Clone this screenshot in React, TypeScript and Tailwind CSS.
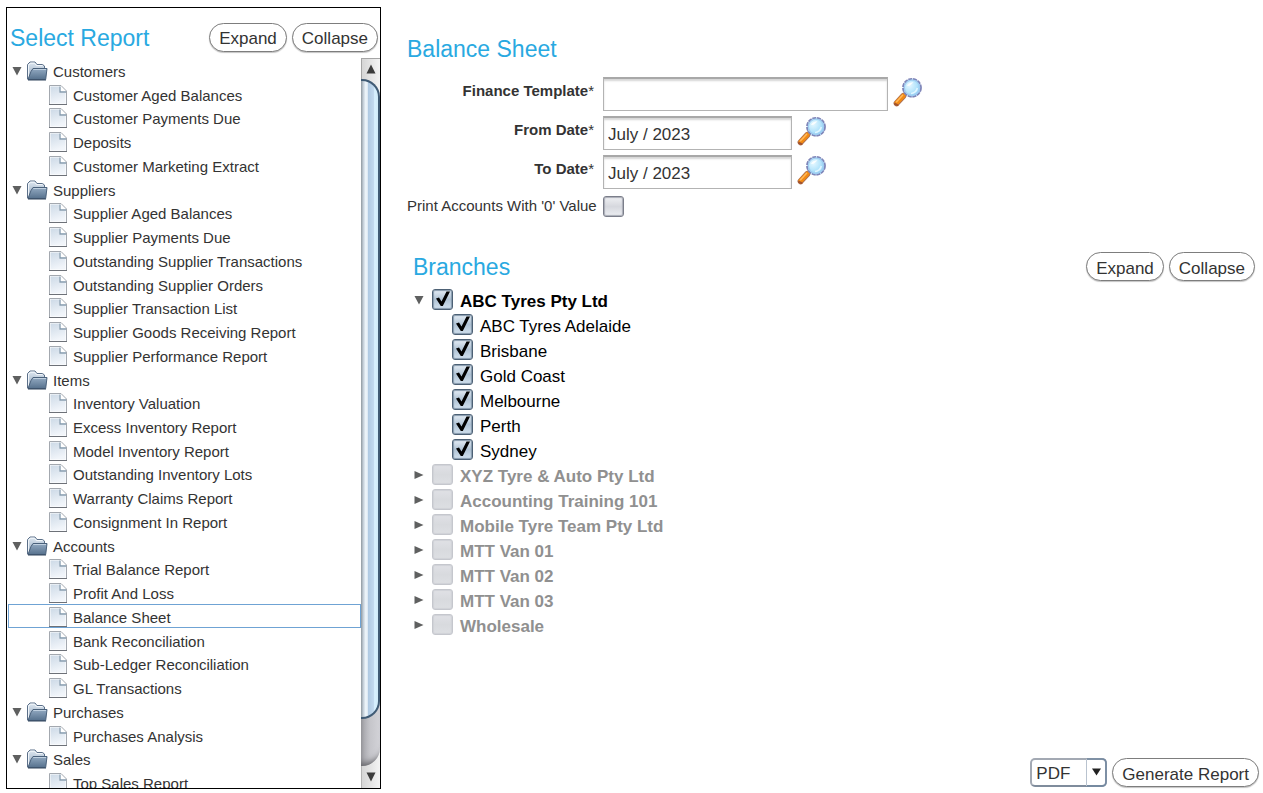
import { useState } from "react";
import type { ReactNode } from "react";

type Group = { name: string; reports: string[] };
type Branch = { name: string; disabled?: boolean; children?: string[] };

const GROUPS: Group[] = [
  {
    name: "Customers",
    reports: ["Customer Aged Balances", "Customer Payments Due", "Deposits", "Customer Marketing Extract"],
  },
  {
    name: "Suppliers",
    reports: [
      "Supplier Aged Balances",
      "Supplier Payments Due",
      "Outstanding Supplier Transactions",
      "Outstanding Supplier Orders",
      "Supplier Transaction List",
      "Supplier Goods Receiving Report",
      "Supplier Performance Report",
    ],
  },
  {
    name: "Items",
    reports: [
      "Inventory Valuation",
      "Excess Inventory Report",
      "Model Inventory Report",
      "Outstanding Inventory Lots",
      "Warranty Claims Report",
      "Consignment In Report",
    ],
  },
  {
    name: "Accounts",
    reports: [
      "Trial Balance Report",
      "Profit And Loss",
      "Balance Sheet",
      "Bank Reconciliation",
      "Sub-Ledger Reconciliation",
      "GL Transactions",
    ],
  },
  { name: "Purchases", reports: ["Purchases Analysis"] },
  { name: "Sales", reports: ["Top Sales Report"] },
];

const BRANCHES: Branch[] = [
  {
    name: "ABC Tyres Pty Ltd",
    children: ["ABC Tyres Adelaide", "Brisbane", "Gold Coast", "Melbourne", "Perth", "Sydney"],
  },
  { name: "XYZ Tyre & Auto Pty Ltd", disabled: true },
  { name: "Accounting Training 101", disabled: true },
  { name: "Mobile Tyre Team Pty Ltd", disabled: true },
  { name: "MTT Van 01", disabled: true },
  { name: "MTT Van 02", disabled: true },
  { name: "MTT Van 03", disabled: true },
  { name: "Wholesale", disabled: true },
];

function Triangle({ open }: { open: boolean }) {
  return (
    <svg width="10" height="10" viewBox="0 0 10 10" className="block" aria-hidden="true">
      <path d={open ? "M0.5 1H9.5L5 9.5Z" : "M0.5 1V9L9.5 5Z"} fill="#5f6060" />
    </svg>
  );
}

function FolderIcon() {
  return (
    <svg width="21" height="20" viewBox="0 0 21 20" className="block shrink-0" aria-hidden="true">
      <defs>
        <linearGradient id="folderBack" x1="0" y1="0" x2="0" y2="1">
          <stop offset="0" stopColor="#dfe8f1" />
          <stop offset="1" stopColor="#8ea4bc" />
        </linearGradient>
        <linearGradient id="folderFront" x1="0" y1="0" x2="0" y2="1">
          <stop offset="0" stopColor="#93aac2" />
          <stop offset="1" stopColor="#56718d" />
        </linearGradient>
      </defs>
      <path
        d="M0.5 18V3.5L3 1H8L10 3.5H15.5L17.5 5V10L15 18Z"
        fill="url(#folderBack)"
        stroke="#5b6f88"
        strokeLinejoin="round"
      />
      <path d="M1.6 17V4.2L3.5 2.2H7.5L9.5 4.6H15.4" fill="none" stroke="#f5f9fc" />
      <path d="M1 18.5L4 10.5L6 7.5H20L18.7 18.5Z" fill="url(#folderFront)" stroke="#4a617b" strokeLinejoin="round" />
      <path d="M6.3 8.5H19" stroke="#c0d0e0" />
      <path d="M1 19H19" stroke="#33475e" />
    </svg>
  );
}

function PageIcon() {
  return (
    <svg width="18" height="20" viewBox="0 0 18 20" className="block shrink-0" aria-hidden="true">
      <defs>
        <linearGradient id="page" x1="0" y1="0" x2="0.3" y2="1">
          <stop offset="0" stopColor="#cddae7" />
          <stop offset="1" stopColor="#f1f5fa" />
        </linearGradient>
      </defs>
      <path d="M0.5 0.5H12L17.5 6V19.5H0.5Z" fill="#fff" stroke="#a3a8af" />
      <path d="M1.5 1.5H10.5V8H16.5V18.5H1.5Z" fill="url(#page)" />
      <path d="M11 1L17 7H11Z" fill="#fff" />
      <path d="M11 1.5V7H17" fill="none" stroke="#8299ad" strokeWidth="1.3" />
      <path d="M0 19.5H18" stroke="#6d7178" />
    </svg>
  );
}

function MagnifierIcon() {
  return (
    <svg width="30" height="30" viewBox="0 0 30 30" className="block" aria-hidden="true">
      <defs>
        <radialGradient id="lens" cx="0.35" cy="0.35" r="0.75">
          <stop offset="0" stopColor="#e6f8ff" />
          <stop offset="0.55" stopColor="#b4e4fb" />
          <stop offset="1" stopColor="#86c6f2" />
        </radialGradient>
      </defs>
      <path d="M10 18L13 15.5" stroke="#8d8fa8" strokeWidth="3" />
      <path d="M3.6 26.2L10.4 18.9" stroke="#a87058" strokeWidth="6" strokeLinecap="round" />
      <path d="M3.6 26L10.4 18.7" stroke="#f28a14" strokeWidth="4.6" strokeLinecap="round" />
      <path d="M3.6 24.7L9.6 18.2" stroke="#ffb95c" strokeWidth="1.5" strokeLinecap="round" />
      <path d="M2 27L4.6 28.2" stroke="#a2532d" strokeWidth="2" strokeLinecap="round" />
      <circle cx="19" cy="10.8" r="9" fill="url(#lens)" stroke="#7f85b8" strokeWidth="1.8" strokeDasharray="4 0.8" />
      <circle cx="19" cy="10.8" r="7.6" fill="none" stroke="#a0cdf0" strokeWidth="1.2" />
      <path d="M14 9C15 6.5 17.5 5 20.5 5.2C19 7 16.5 9.5 14 9Z" fill="#fff" opacity="0.85" />
      <path d="M18 16.5C21 16.5 23.8 14 24.3 11" fill="none" stroke="#e0f6ff" strokeWidth="1.6" />
    </svg>
  );
}

function PillButton({ children, onClick }: { children: ReactNode; onClick?: () => void }) {
  return (
    <button
      type="button"
      onClick={onClick}
      className="h-[29px] rounded-full border border-[#7d7d7d] bg-white px-[9px] pt-1 text-[17px] leading-5 whitespace-nowrap text-[#333333] shadow-[0_1px_1px_#c4c4c4]"
    >
      {children}
    </button>
  );
}

type CheckProps = { id: string; checked: boolean; disabled?: boolean; onChange: () => void };

function CheckBox({ id, checked, disabled, onChange }: CheckProps) {
  return (
    <span className="relative block size-[21px] shrink-0">
      <input
        id={id}
        type="checkbox"
        checked={checked}
        disabled={disabled}
        onChange={onChange}
        className="block size-[21px] appearance-none rounded-[3px] border border-[#7b7e8a] bg-linear-to-b from-[#eff0f3] via-[#d6d8de] to-[#eceef2] shadow-[inset_0_0_1px_1px_#a9acb6] checked:border-[#4d6175] checked:from-[#e6eef6] checked:via-[#b0c3d5] checked:to-[#d3e2ef] checked:shadow-[inset_0_0_1px_1px_#8498ab] disabled:border-[#c5c7cd] disabled:from-[#e0e1e6] disabled:via-[#d8dade] disabled:to-[#dddfe3] disabled:shadow-[inset_0_0_1px_1px_#d0d2d7]"
      />
      {checked && (
        <svg
          width="21"
          height="21"
          viewBox="0 0 21 21"
          className="pointer-events-none absolute top-0 left-0"
          aria-hidden="true"
        >
          <path d="M4 9.5L7 8.5L9.5 12.5L14.5 2.5H18L10.8 17H8.8Z" fill="#000" />
        </svg>
      )}
    </span>
  );
}

function ScrollBar() {
  return (
    <div className="flex w-[19px] shrink-0 flex-col bg-linear-to-r from-[#d4d4d4] to-[#f4f4f4]" aria-hidden="true">
      <div className="flex h-[21px] items-center justify-center border-t border-l border-[#a5a5a5]">
        <svg width="10" height="10" viewBox="0 0 10 10">
          <path d="M5 0.5L9.5 9.5H0.5Z" fill="#3c3c3c" />
        </svg>
      </div>
      <div className="flex grow flex-col rounded-r-[18px] bg-linear-to-r from-[#a4a4a9] via-[#c6c6cb] to-[#d3d3d8] shadow-[inset_2px_-7px_6px_-4px_#66666a]">
        <div className="grow-27 rounded-r-[18px] border-y-2 border-r-2 border-[#405b75] bg-[linear-gradient(to_right,#8f989f_0%,#c5d0da_14%,#f0f7fc_28%,#e2ecf5_38%,#afc9e2_42%,#c3daef_76%,#d8f1ff_80%,#cfeaf8_100%)]" />
        <div className="grow-2" />
      </div>
      <div className="flex h-[22px] items-center justify-center border-l border-[#b5b5b5]">
        <svg width="10" height="10" viewBox="0 0 10 10">
          <path d="M5 9.5L9.5 0.5H0.5Z" fill="#3c3c3c" />
        </svg>
      </div>
    </div>
  );
}

function ReportPanel() {
  const [closed, setClosed] = useState<string[]>([]);
  const [selected, setSelected] = useState("Balance Sheet");

  const toggle = (name: string) =>
    setClosed((c) => (c.includes(name) ? c.filter((n) => n !== name) : [...c, name]));

  const rows = GROUPS.flatMap((g) => [
    { name: g.name, folder: true },
    ...(closed.includes(g.name) ? [] : g.reports.map((name) => ({ name, folder: false }))),
  ]);

  return (
    <aside className="flex w-[375px] shrink-0 flex-col border border-black">
      <header className="flex h-[50px] shrink-0 items-center pt-2 pr-[2px] pl-[3px]">
        <h1 className="grow pt-[2px] text-[23px] leading-7 text-[#29a9e1]">Select Report</h1>
        <div className="flex gap-[5px]">
          <PillButton onClick={() => setClosed([])}>Expand</PillButton>
          <PillButton onClick={() => setClosed(GROUPS.map((g) => g.name))}>Collapse</PillButton>
        </div>
      </header>
      <div className="flex min-h-0 grow">
        <div className="min-w-0 grow overflow-hidden pl-px">
          <ul className="grid auto-rows-fr" style={{ height: Math.round((rows.length * 712) / 30) }}>
            {rows.map((row) =>
              row.folder ? (
                <li key={row.name} className="flex min-h-0 items-center pt-[2px] pl-1">
                  <button
                    type="button"
                    aria-label={`Toggle ${row.name}`}
                    onClick={() => toggle(row.name)}
                    className="mr-[5px]"
                  >
                    <Triangle open={!closed.includes(row.name)} />
                  </button>
                  <FolderIcon />
                  <span className="pt-[2px] pl-[5px] text-[15px] leading-5 text-[#333333]">{row.name}</span>
                </li>
              ) : (
                <li key={row.name} className="min-h-0">
                  <button
                    type="button"
                    onClick={() => setSelected(row.name)}
                    className={`flex h-full w-full items-center border pt-[2px] pl-10 text-left ${
                      selected === row.name ? "border-[#6fa3d4]" : "border-transparent"
                    }`}
                  >
                    <PageIcon />
                    <span className="pt-[2px] pl-[6px] text-[15px] leading-5 text-[#333333]">{row.name}</span>
                  </button>
                </li>
              ),
            )}
          </ul>
        </div>
        <ScrollBar />
      </div>
    </aside>
  );
}

function LookupField({ id, label, value, wide }: { id: string; label: string; value: string; wide?: boolean }) {
  return (
    <>
      <label htmlFor={id} className="pb-[6px] text-right text-[15px] leading-5 font-bold">
        {label}
        <span className="font-normal">*</span>
      </label>
      <div className="flex items-center">
        <input
          id={id}
          type="text"
          defaultValue={value}
          className={`h-[34px] border border-t-2 border-[#b3b3b3] border-t-[#a8a8a8] bg-white px-1 pt-[2px] text-[17px] text-[#333333] shadow-[inset_0_2px_2px_#d6d6d6] outline-none ${
            wide ? "w-[285px]" : "w-[189px]"
          }`}
        />
        <button type="button" aria-label={`Search ${label}`} className="-mt-1 ml-[5px]">
          <MagnifierIcon />
        </button>
      </div>
    </>
  );
}

function BranchTree() {
  const [open, setOpen] = useState<string[]>(["ABC Tyres Pty Ltd"]);
  const [checked, setChecked] = useState<string[]>([
    "ABC Tyres Pty Ltd",
    ...(BRANCHES[0].children ?? []),
  ]);
  const flip = (list: string[], name: string) =>
    list.includes(name) ? list.filter((n) => n !== name) : [...list, name];

  return (
    <section className="pl-[6px]">
      <header className="flex items-center pr-1">
        <h2 className="grow text-[23px] leading-7 text-[#29a9e1]">Branches</h2>
        <div className="flex gap-[5px]">
          <PillButton onClick={() => setOpen(BRANCHES.map((b) => b.name))}>Expand</PillButton>
          <PillButton onClick={() => setOpen([])}>Collapse</PillButton>
        </div>
      </header>
      <ul className="mt-[6px]">
        {BRANCHES.map((b) => (
          <li key={b.name}>
            <div className="flex h-[25px] items-center pl-px">
              <button
                type="button"
                aria-label={`Toggle ${b.name}`}
                onClick={() => setOpen(flip(open, b.name))}
                className="mr-2"
              >
                <Triangle open={open.includes(b.name)} />
              </button>
              <CheckBox
                id={b.name}
                checked={checked.includes(b.name)}
                disabled={b.disabled}
                onChange={() => setChecked(flip(checked, b.name))}
              />
              <label
                htmlFor={b.name}
                className={`pt-1 pl-[7px] text-[17px] leading-5 font-bold ${
                  b.disabled ? "text-[#909090]" : "text-black"
                }`}
              >
                {b.name}
              </label>
            </div>
            {b.children && open.includes(b.name) && (
              <ul>
                {b.children.map((name) => (
                  <li key={name} className="flex h-[25px] items-center pl-[39px]">
                    <CheckBox
                      id={name}
                      checked={checked.includes(name)}
                      onChange={() => setChecked(flip(checked, name))}
                    />
                    <label htmlFor={name} className="pt-1 pl-[7px] text-[17px] leading-5 text-black">
                      {name}
                    </label>
                  </li>
                ))}
              </ul>
            )}
          </li>
        ))}
      </ul>
    </section>
  );
}

export default function App() {
  const [printZero, setPrintZero] = useState(false);

  return (
    <div className="flex h-screen bg-white pt-[7px] pr-1 pb-1 pl-[6px] font-['Liberation_Sans',Arial,sans-serif] text-[#333333]">
      <ReportPanel />
      <main className="flex min-w-0 grow flex-col pt-7 pl-[26px]">
        <h2 className="text-[23px] leading-7 text-[#29a9e1]">Balance Sheet</h2>
        <form className="mt-[14px] grid grid-cols-[187px_1fr] items-center gap-x-[9px] gap-y-[5px]">
          <LookupField id="template" label="Finance Template" value="" wide />
          <LookupField id="from" label="From Date" value="July / 2023" />
          <LookupField id="to" label="To Date" value="July / 2023" />
          <label htmlFor="zero" className="text-right text-[15px] leading-6 whitespace-nowrap">
            Print Accounts With '0' Value
          </label>
          <CheckBox id="zero" checked={printZero} onChange={() => setPrintZero(!printZero)} />
        </form>
        <div className="mt-[34px] grow">
          <BranchTree />
        </div>
        <footer className="flex justify-end gap-[5px] pb-[2px]">
          <div className="relative">
            <select
              aria-label="Output format"
              className="h-[29px] w-[77px] appearance-none rounded-[5px] border-2 border-[#a3a9b3] border-b-[#7f8c9c] bg-white pt-[3px] pl-1 text-[17px] leading-5 text-[#333333]"
            >
              <option>PDF</option>
              <option>Excel</option>
              <option>CSV</option>
            </select>
            <svg
              width="22"
              height="29"
              viewBox="0 0 22 29"
              className="pointer-events-none absolute top-0 right-0"
              aria-hidden="true"
            >
              <path d="M1.5 1V28" stroke="#b9c3cf" />
              <path d="M2 1H17Q21 1 21 5V24Q21 28 17 28H2" fill="none" stroke="#7489a1" strokeWidth="1.6" />
              <path d="M7 10.5H16L11.5 17.5Z" fill="#222" />
            </svg>
          </div>
          <PillButton>Generate Report</PillButton>
        </footer>
      </main>
    </div>
  );
}
